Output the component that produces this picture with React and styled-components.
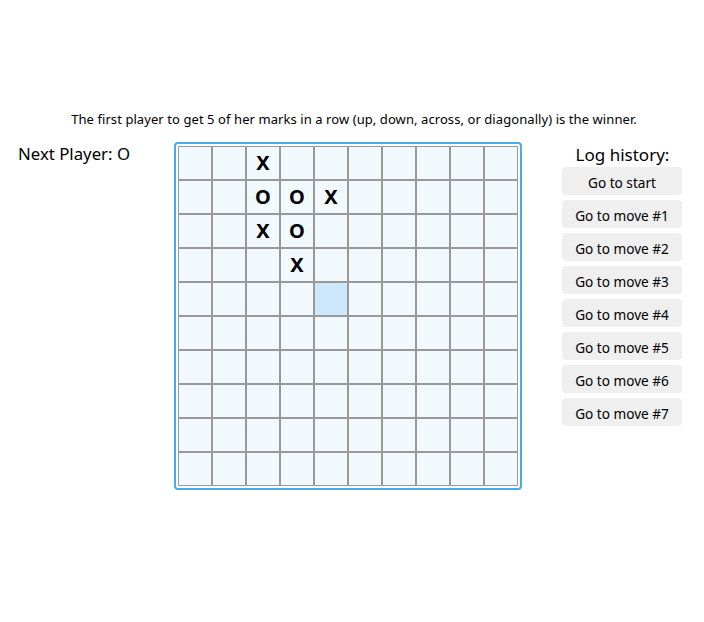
import React from "react";
import styled, { createGlobalStyle } from "styled-components";

const Global = createGlobalStyle`
  html, body { margin: 0; padding: 0; background: #fff; }
  body { font-family: "Noto Sans", "Open Sans", sans-serif; color: #000; }
`;

const Page = styled.div`
  width: 704px;
  padding-top: 110px;
  box-sizing: border-box;
`;

const Rule = styled.p`
  margin: 0 0 14px 0;
  text-align: center;
  font-size: 13px;
  letter-spacing: 0.075px;
  line-height: 18px;
  padding-left: 4px;
`;

const Row = styled.div`
  display: flex;
  align-items: flex-start;
  padding-left: 18px;
`;

const Info = styled.div`
  width: 156px;
  font-size: 16.8px;
  line-height: 24px;
`;

const Board = styled.div`
  border: 2px solid #45ade8;
  border-radius: 4px;
  padding: 2px;
  display: grid;
  grid-template-columns: repeat(10, 34px);
  grid-auto-rows: 34px;
`;

const Cell = styled.button`
  box-sizing: border-box;
  width: 34px;
  height: 34px;
  margin: 0;
  padding: 0;
  border: 1px solid #999;
  background: ${(p) => (p.$hl ? "#cde8fb" : "#f2f9fd")};
  font-family: "Noto Sans", "Open Sans", sans-serif;
  font-weight: 700;
  font-size: 20px;
  line-height: 32px;
  color: #000;
  text-align: center;
`;

const Log = styled.div`
  margin-left: 40px;
  width: 120px;
  display: flex;
  flex-direction: column;
  gap: 5px;
`;

const LogTitle = styled.div`
  height: 20px;
  text-align: center;
  font-size: 17px;
  line-height: 25px;
  white-space: nowrap;
  padding-left: 1px;
`;

const Btn = styled.button`
  box-sizing: border-box;
  height: 28px;
  width: 120px;
  border: none;
  border-radius: 4px;
  background: #efefef;
  font-family: "Noto Sans", "Open Sans", sans-serif;
  font-size: 13.6px;
  color: #000;
  padding: 3px 0 0 0;
`;

const marks = {
  "0,2": "X",
  "1,2": "O",
  "1,3": "O",
  "1,4": "X",
  "2,2": "X",
  "2,3": "O",
  "3,3": "X",
};

export default function App() {
  const cells = [];
  for (let r = 0; r < 10; r++) {
    for (let c = 0; c < 10; c++) {
      cells.push(
        <Cell key={`${r}-${c}`} $hl={r === 4 && c === 4}>
          {marks[`${r},${c}`] || ""}
        </Cell>
      );
    }
  }
  return (
    <>
      <Global />
      <Page>
        <Rule>
          The first player to get 5 of her marks in a row (up, down, across, or diagonally) is the winner.
        </Rule>
        <Row>
          <Info>Next Player: O</Info>
          <Board>{cells}</Board>
          <Log>
            <LogTitle>Log history:</LogTitle>
            <Btn>Go to start</Btn>
            {[1, 2, 3, 4, 5, 6, 7].map((n) => (
              <Btn key={n}>Go to move #{n}</Btn>
            ))}
          </Log>
        </Row>
      </Page>
    </>
  );
}
